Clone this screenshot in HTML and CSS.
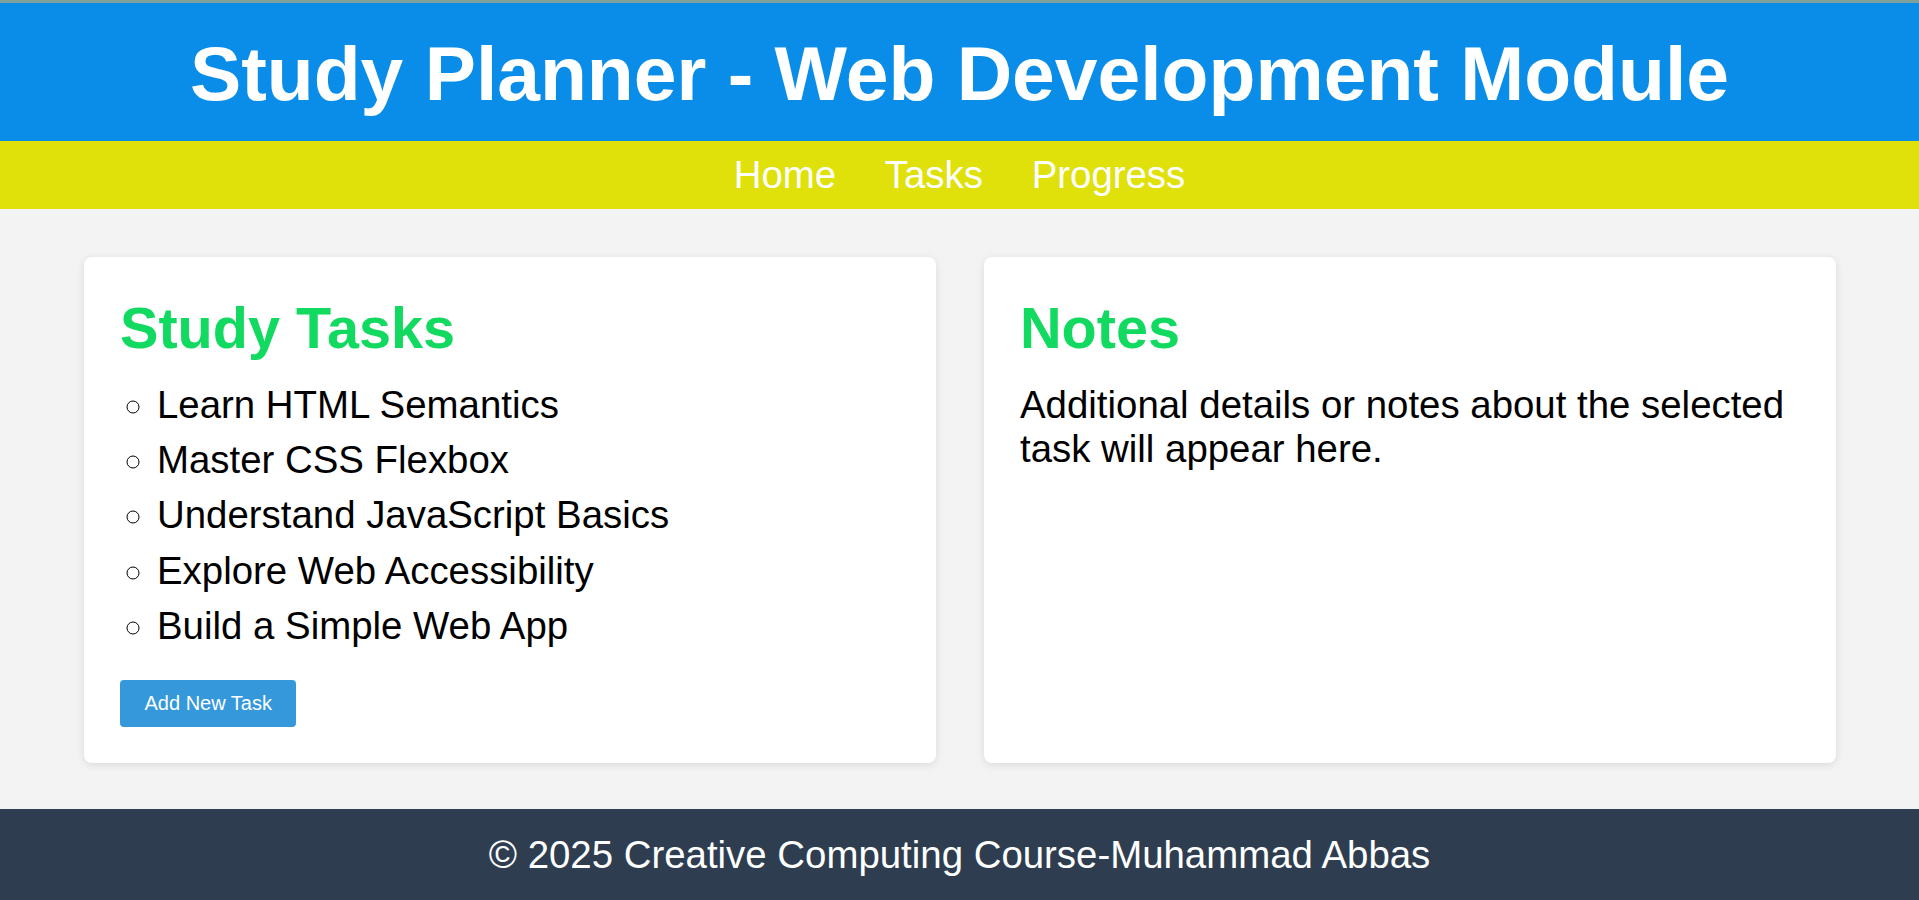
FILE: index.html
```html
<!DOCTYPE html>
<html lang="en">
<head>
<meta charset="utf-8">
<title>Study Planner - Web Development Module</title>
<link rel="stylesheet" href="styles.css">
</head>
<body>
<header class="site-header">
  <h1 class="site-title">Study Planner - Web Development Module</h1>
</header>
<nav class="site-nav">
  <a class="nav-link" href="#">Home</a>
  <a class="nav-link" href="#">Tasks</a>
  <a class="nav-link" href="#">Progress</a>
</nav>
<main class="content">
  <section class="card">
    <h2 class="card-title">Study Tasks</h2>
    <ul class="task-list">
      <li>Learn HTML Semantics</li>
      <li>Master CSS Flexbox</li>
      <li>Understand JavaScript Basics</li>
      <li>Explore Web Accessibility</li>
      <li>Build a Simple Web App</li>
    </ul>
    <button class="add-btn" type="button">Add New Task</button>
  </section>
  <section class="card">
    <h2 class="card-title">Notes</h2>
    <p class="notes-text">Additional details or notes about the selected task will appear here.</p>
  </section>
</main>
<footer class="site-footer">
  <p class="footer-text">&copy; 2025 Creative Computing Course-Muhammad Abbas</p>
</footer>
</body>
</html>
```

FILE: styles.css
```css
html, body {
  margin: 0;
  padding: 0;
}

body {
  font-family: "Liberation Sans", Arial, sans-serif;
  font-size: 38.4px;
  background: #f3f3f3;
  color: #000;
}

.site-header {
  background: #098de9;
  border-top: 3px solid #7f9f9c;
  padding: 25.5px 0 23px;
  text-align: center;
}

.site-title {
  margin: 0;
  font-size: 76.8px;
  font-weight: bold;
  color: #fff;
  line-height: normal;
}

.site-nav {
  background: #e0e00a;
  padding: 12px 0;
  text-align: center;
}

.nav-link {
  color: #fff;
  text-decoration: none;
  margin: 0 19px;
}

.content {
  display: flex;
  gap: 48px;
  padding: 48.5px 83px 46px 84px;
}

.card {
  flex: 1;
  background: #fff;
  border-radius: 8px;
  box-shadow: 0 2px 8px rgba(0, 0, 0, 0.1);
  padding: 38px 36px 36px;
}

.card-title {
  margin: 0;
  font-size: 57.6px;
  font-weight: bold;
  color: #12d95f;
  line-height: normal;
}

.task-list {
  list-style-type: circle;
  margin: 22px 0 0;
  padding-left: 37px;
}

.task-list li + li {
  margin-top: 11.2px;
}

.add-btn {
  display: block;
  margin-top: 32px;
  background: #3498db;
  color: #fff;
  border: none;
  border-radius: 4px;
  padding: 12px 24.5px;
  font-family: "Liberation Sans", Arial, sans-serif;
  font-size: 20px;
  line-height: normal;
  cursor: pointer;
}

.notes-text {
  margin: 22px 0 0;
}

.site-footer {
  background: #2e3e50;
  color: #fff;
  padding: 24px 0;
  text-align: center;
}

.footer-text {
  margin: 0;
}
```
